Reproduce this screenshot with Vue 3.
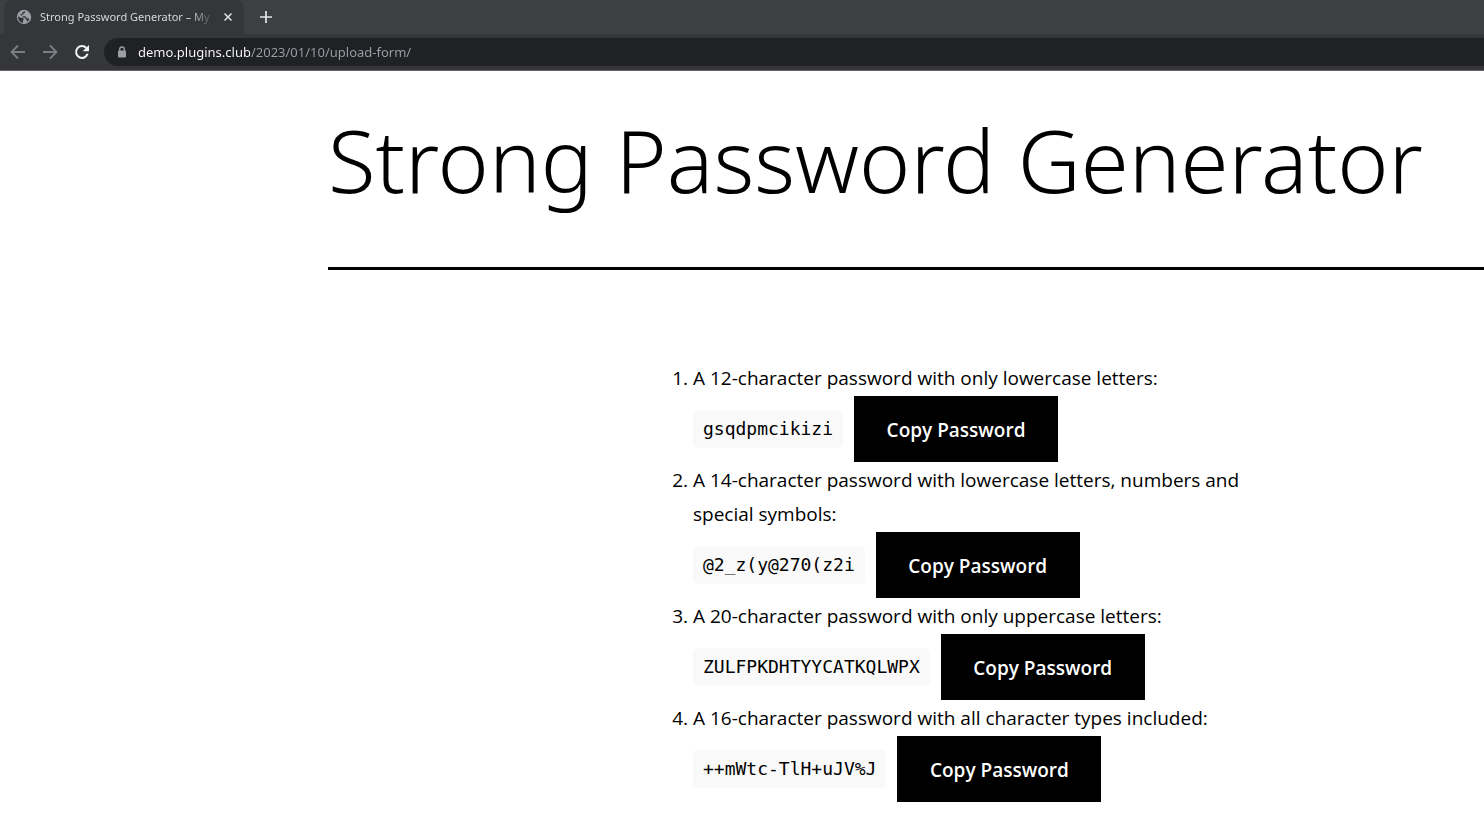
<script setup>
import { ref } from 'vue'

const address = ref('demo.plugins.club/2023/01/10/upload-form/')

const passwords = [
  { id: 'lower', label: 'A 12-character password with only lowercase letters:', value: 'gsqdpmcikizi' },
  { id: 'mixed', label: 'A 14-character password with lowercase letters, numbers and special symbols:', value: '@2_z(y@270(z2i' },
  { id: 'upper', label: 'A 20-character password with only uppercase letters:', value: 'ZULFPKDHTYYCATKQLWPX' },
  { id: 'all', label: 'A 16-character password with all character types included:', value: '++mWtc-TlH+uJV%J' },
]

function copy(text) {
  navigator.clipboard?.writeText(text)
}
</script>

<template>
  <div class="window">
    <header class="chrome">
      <div class="tabs">
        <div class="tab">
          <svg class="globe" viewBox="0 0 16 16" aria-hidden="true">
            <circle cx="8" cy="8" r="7.200" fill="#9aa0a6" />
            <path d="M2 7.300 4.600 8.700H6.600L8 10.100 7 11.500V13.800C4.200 13.600 2 11.200 2 8.200zM9.300 2.200C9.500 3.500 8.600 4.200 7.400 4.400V5.700H6V7.200H9.700L10.700 9.200H12.300L13.300 10.200C12.800 11.300 12 12.200 11 12.900V11.300L9.500 10.400V8.800L7.200 8.500 6.500 7.200 4.700 6.200V5.200L6.500 4.500V3z" fill="#35363a" />
          </svg>
          <span class="tab-title">Strong Password Generator – My</span>
          <button class="icon-button close" type="button" aria-label="Close tab">
            <svg viewBox="0 0 10 10"><path d="M1.500 1.500l7 7M8.500 1.500l-7 7" stroke="#dfe1e5" stroke-width="1.500" /></svg>
          </button>
        </div>
        <button class="icon-button add" type="button" aria-label="New tab">
          <svg viewBox="0 0 12 12"><path d="M6 0v12M0 6h12" stroke="#e4e6e9" stroke-width="1.700" /></svg>
        </button>
      </div>
      <nav class="toolbar" aria-label="Browser">
        <button class="icon-button nav" type="button" aria-label="Back" disabled>
          <svg viewBox="0 0 16 16" fill="none" stroke="#7b7e82" stroke-width="1.800"><path d="M15 8H2M8 1.500 1.500 8 8 14.500" /></svg>
        </button>
        <button class="icon-button nav" type="button" aria-label="Forward" disabled>
          <svg viewBox="0 0 16 16" fill="none" stroke="#7b7e82" stroke-width="1.800"><path d="M1 8h13M8 1.500 14.500 8 8 14.500" /></svg>
        </button>
        <button class="icon-button nav" type="button" aria-label="Reload">
          <svg viewBox="0 0 16 16"><path d="M13.600 9.800A5.900 5.900 0 1 1 12.300 4" fill="none" stroke="#f1f3f4" stroke-width="2" /><path d="M15 1v6.300H8.700z" fill="#f1f3f4" /></svg>
        </button>
        <label class="omnibox">
          <svg class="lock" viewBox="0 0 10 12" aria-hidden="true">
            <path d="M2.700 5V3.300a2.300 2.300 0 0 1 4.600 0V5" fill="none" stroke="#9aa0a6" stroke-width="1.300" />
            <rect x="1" y="4.500" width="8" height="7" rx="1" fill="#9aa0a6" />
          </svg>
          <input v-model="address" class="address" type="text" aria-label="Address" spellcheck="false" />
        </label>
      </nav>
    </header>

    <main class="page">
      <h1 class="title">Strong Password Generator</h1>
      <ol class="list">
        <li v-for="item in passwords" :key="item.id">
          <div class="label">{{ item.label }}</div>
          <div class="row">
            <code class="password">{{ item.value }}</code>
            <button class="copy" type="button" @click="copy(item.value)">Copy Password</button>
          </div>
        </li>
      </ol>
    </main>
  </div>
</template>

<style>
body {
  margin: 0;
  background: #fff;
}
</style>

<style scoped>
.window {
  min-height: 100vh;
  overflow: hidden;
  background: #fff;
  color: #000;
  font-family: "Noto Sans", "Open Sans", sans-serif;
}

.chrome {
  background: #35363a;
  border-bottom: 1px solid #626166;
}

.tabs {
  display: flex;
  align-items: center;
  height: 34px;
  padding-left: 4px;
  background: #3c4043;
}

.tab {
  display: flex;
  align-items: center;
  box-sizing: border-box;
  width: 240px;
  height: 34px;
  padding: 0 10px 0 12px;
  border-radius: 8px 8px 0 0;
  background: #35363a;
}

.globe {
  flex: none;
  width: 16px;
  height: 16px;
  margin-right: 8px;
}

.tab-title {
  flex: 1;
  overflow: hidden;
  white-space: nowrap;
  color: #d5d7da;
  font-size: 11px;
  line-height: 16px;
  mask-image: linear-gradient(to right, #000 calc(100% - 24px), transparent);
}

.icon-button {
  display: flex;
  align-items: center;
  justify-content: center;
  flex: none;
  padding: 0;
  border: 0;
  background: none;
}

.close {
  width: 12px;
  height: 12px;
  margin-left: 8px;
}

.close svg {
  width: 10px;
  height: 10px;
}

.add {
  width: 28px;
  height: 28px;
  margin-left: 8px;
}

.add svg {
  width: 12px;
  height: 12px;
}

.toolbar {
  display: flex;
  align-items: center;
  gap: 16px;
  height: 36px;
  padding-left: 10px;
}

.nav,
.nav svg {
  width: 16px;
  height: 16px;
}

.omnibox {
  display: flex;
  flex: 1;
  align-items: center;
  gap: 11px;
  height: 28px;
  margin-left: -2px;
  padding-left: 13px;
  border-radius: 14px 0 0 14px;
  background: #202124;
}

.lock {
  flex: none;
  width: 10px;
  height: 12px;
}

.address {
  flex: 1;
  min-width: 0;
  padding: 0;
  border: 0;
  outline: 0;
  background: linear-gradient(to right, #fff 112px, #9aa0a6 112px);
  background-clip: text;
  color: transparent;
  font: 13px/20px "Noto Sans", "Open Sans", sans-serif;
}

.page {
  padding-left: 328px;
}

.title {
  margin: 0;
  padding: 23px 0 43px;
  border-bottom: 3px solid #000;
  font-size: 87px;
  font-weight: 300;
  line-height: 130px;
  white-space: nowrap;
}

.list {
  max-width: 560px;
  margin: 91px 0 0 365px;
  padding: 0;
  font-family: "Open Sans", "Noto Sans", sans-serif;
  font-size: 19px;
  font-weight: 400;
  line-height: 34px;
}

.row {
  display: flex;
  align-items: center;
  gap: 11px;
  height: 68px;
}

.password {
  padding: 2px 10px;
  border-radius: 5px;
  background: #f9f9f9;
  font-family: "DejaVu Sans Mono", monospace;
  font-size: 18px;
}

.copy {
  min-width: 204px;
  height: 66px;
  padding: 2px 32px 0;
  border: 0;
  border-radius: 0;
  background: #000;
  color: #fff;
  font-family: inherit;
  font-size: 19px;
  font-weight: 600;
  line-height: 30px;
}
</style>
